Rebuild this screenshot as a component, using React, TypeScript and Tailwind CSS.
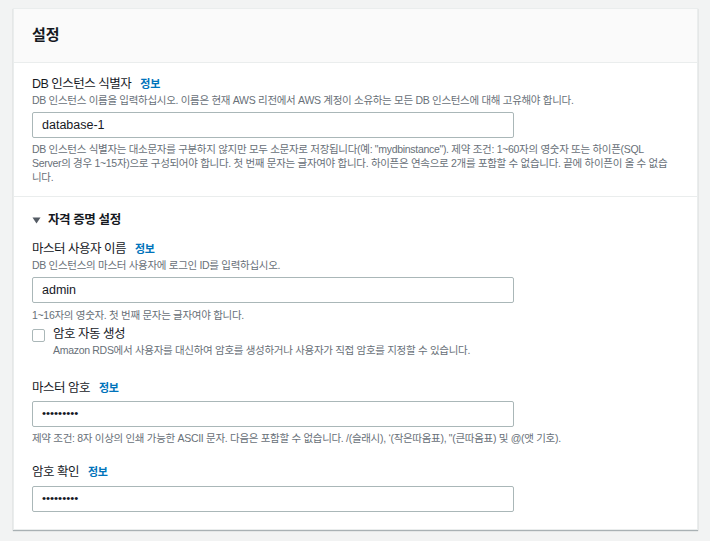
const font = { fontFamily: '"Liberation Sans", "Noto Sans CJK KR", sans-serif' }

function Info() {
  return <span className="ml-[9px] text-[11px] font-bold tracking-[-0.3px] text-[#0073bb]">정보</span>
}

function Label({ children }: { children: React.ReactNode }) {
  return (
    <div className="flex items-baseline text-[12.5px] leading-[16px] tracking-[-0.5px] text-[#16191f]">
      {children}
      <Info />
    </div>
  )
}

function Hint({ children, className = "" }: { children: React.ReactNode; className?: string }) {
  return (
    <p className={`text-[10.5px] leading-[16px] tracking-[-0.3px] text-[#687078] ${className}`}>{children}</p>
  )
}

function Field({ value, dots = false, className = "" }: { value: string; dots?: boolean; className?: string }) {
  return (
    <div
      className={`flex h-[26px] w-[482px] items-center rounded-[2px] border border-[#aab7b8] bg-white px-[9px] text-[#16191f] ${
        dots ? "text-[11.5px]" : "text-[12.5px]"
      } ${className}`}
    >
      {value}
    </div>
  )
}

export default function App() {
  return (
    <div className="min-h-[541px] bg-[#f2f3f3] pl-[13px] pr-[12px] pt-[8px]" style={font}>
      <section className="border border-[#eaeded] bg-white shadow-[0_1px_1px_rgba(0,28,36,0.3)]">
        <header className="flex h-[54px] items-center border-b border-[#eaeded] bg-[#fafafa] px-[18px]">
          <h2 className="text-[15px] font-bold text-[#16191f]">설정</h2>
        </header>

        <div className="px-[18px] pb-[12px] pt-[13px]">
          <Label>DB 인스턴스 식별자</Label>
          <Hint>DB 인스턴스 이름을 입력하십시오. 이름은 현재 AWS 리전에서 AWS 계정이 소유하는 모든 DB 인스턴스에 대해 고유해야 합니다.</Hint>
          <Field value="database-1" className="mt-[4px]" />
          <p className="mt-[4px] text-[10.5px] leading-[14px] tracking-[-0.3px] text-[#687078]">
            DB 인스턴스 식별자는 대소문자를 구분하지 않지만 모두 소문자로 저장됩니다(예: "mydbinstance"). 제약 조건: 1~60자의 영숫자 또는 하이픈(SQL
            <br />
            Server의 경우 1~15자)으로 구성되어야 합니다. 첫 번째 문자는 글자여야 합니다. 하이픈은 연속으로 2개를 포함할 수 없습니다. 끝에 하이픈이 올 수 없습
            <br />
            니다.
          </p>
        </div>

        <div className="border-t border-[#eaeded] px-[18px] pb-[17px] pt-[14px]">
          <div className="flex h-[18px] items-center text-[12.5px] font-bold tracking-[-0.4px] text-[#16191f]">
            <svg width="9" height="7" viewBox="0 0 9 7" className="mr-[7px]">
              <path d="M0.5 0.5 L8.5 0.5 L4.5 6.5 Z" fill="#545b64" />
            </svg>
            자격 증명 설정
          </div>

          <div className="mt-[12px]">
            <Label>마스터 사용자 이름</Label>
            <Hint>DB 인스턴스의 마스터 사용자에 로그인 ID를 입력하십시오.</Hint>
            <Field value="admin" className="mt-[4px]" />
            <Hint className="mt-[4px]">1~16자의 영숫자. 첫 번째 문자는 글자여야 합니다.</Hint>
          </div>

          <div className="mt-[3px] flex">
            <div className="mt-[3px] h-[13px] w-[13px] rounded-[2px] border border-[#aab7b8] bg-white" />
            <div className="ml-[8px]">
              <div className="text-[12.5px] leading-[16px] tracking-[-0.5px] text-[#16191f]">암호 자동 생성</div>
              <Hint>Amazon RDS에서 사용자를 대신하여 암호를 생성하거나 사용자가 직접 암호를 지정할 수 있습니다.</Hint>
            </div>
          </div>

          <div className="mt-[22px]">
            <Label>마스터 암호</Label>
            <Field value="•••••••••" dots className="mt-[5px]" />
            <Hint className="mt-[3px]">
              제약 조건: 8자 이상의 인쇄 가능한 ASCII 문자. 다음은 포함할 수 없습니다. /(슬래시), ‘(작은따옴표), "(큰따옴표) 및 @(앳 기호).
            </Hint>
          </div>

          <div className="mt-[18px]">
            <Label>암호 확인</Label>
            <Field value="•••••••••" dots className="mt-[6px]" />
          </div>
        </div>
      </section>
    </div>
  )
}
